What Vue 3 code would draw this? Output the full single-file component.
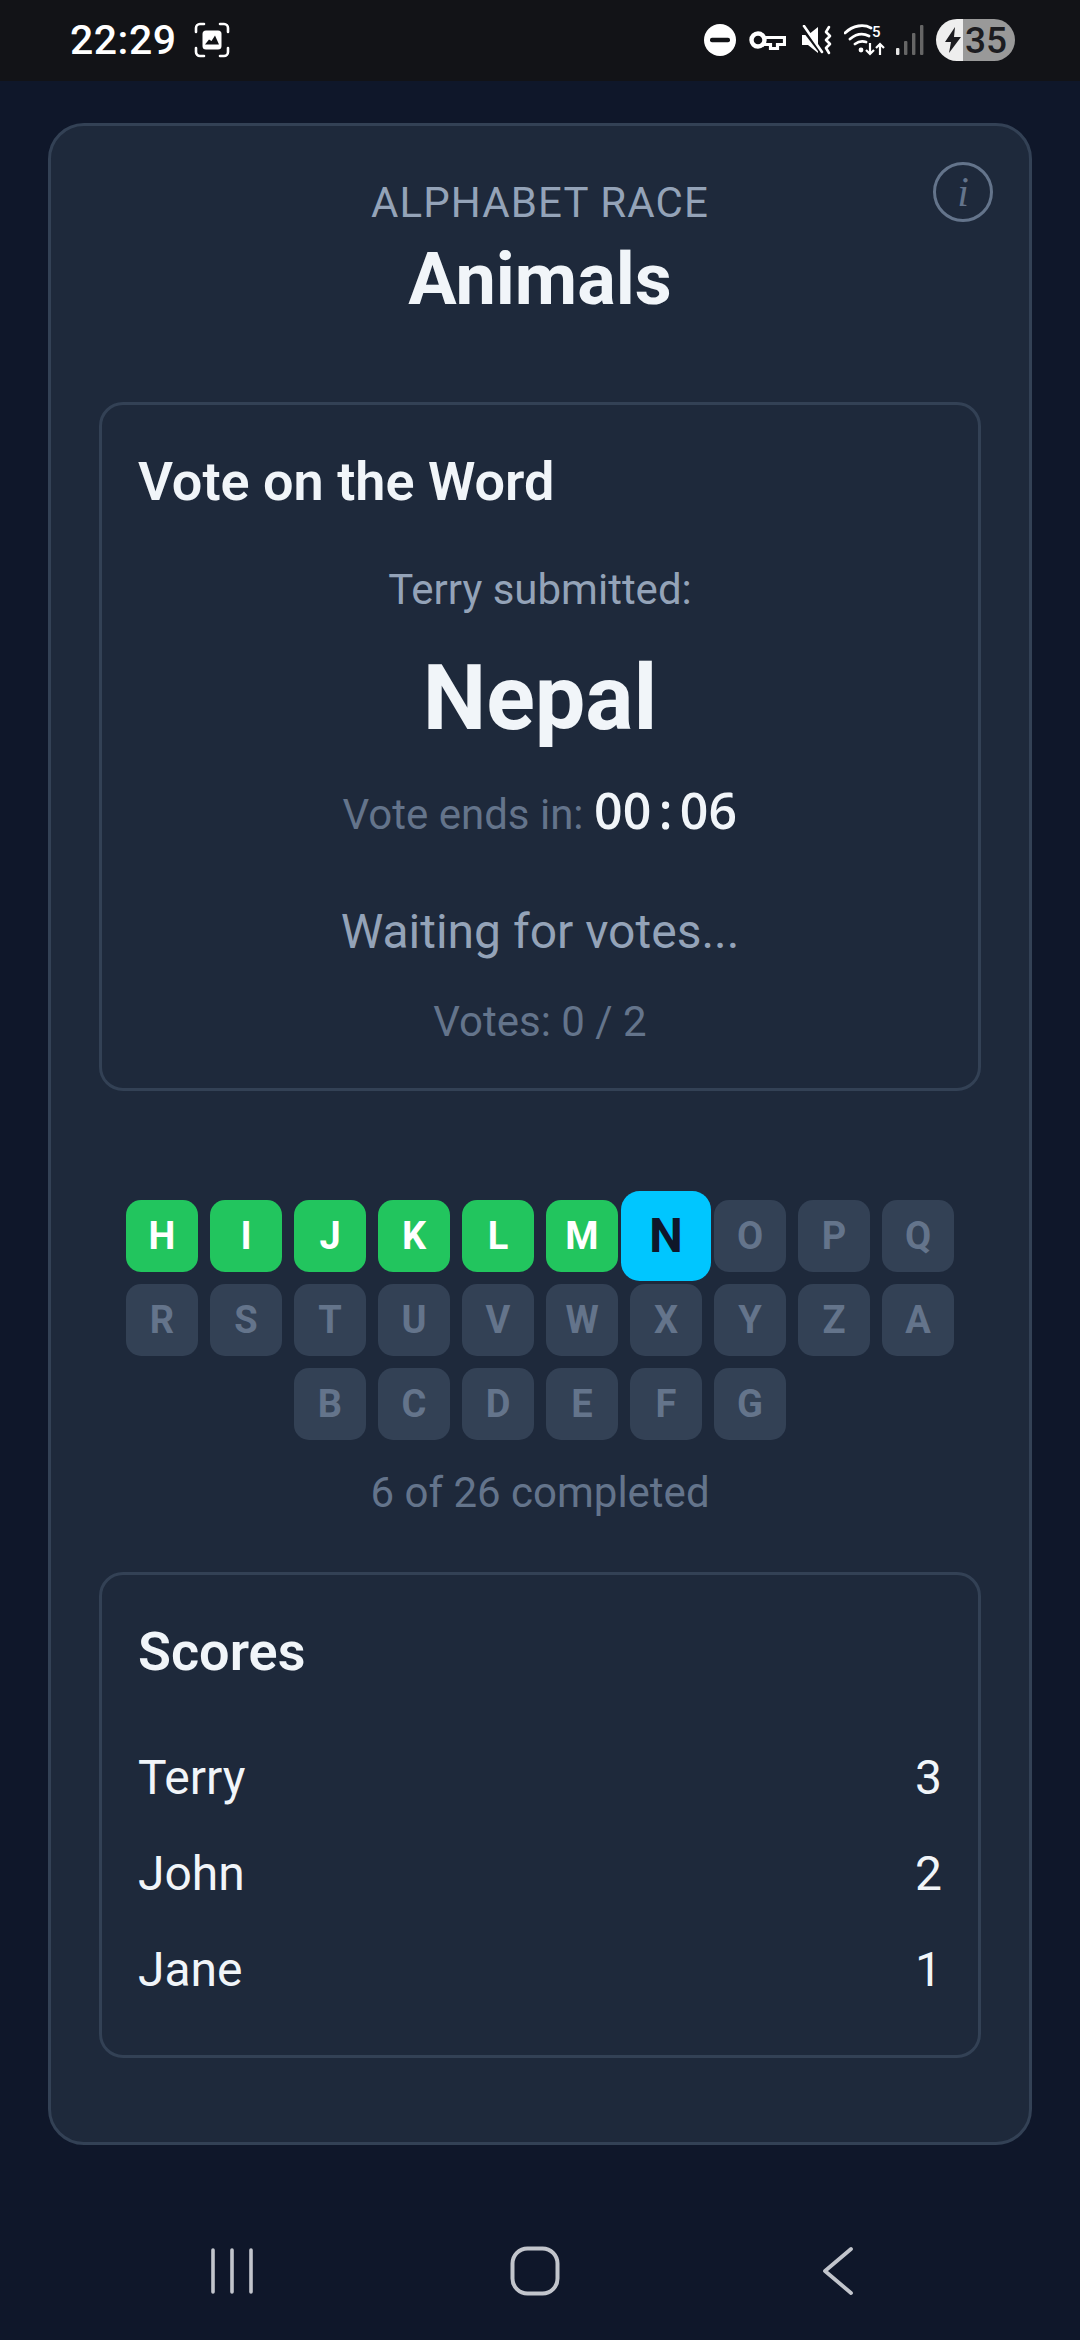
<script setup>
const doneLetters = ["H", "I", "J", "K", "L", "M"];
const current = "N";
const letters = "HIJKLMNOPQRSTUVWXYZABCDEFG".split("");
const scores = [
  { name: "Terry", points: 3 },
  { name: "John", points: 2 },
  { name: "Jane", points: 1 },
];

function tileClass(l) {
  if (l === current) return "tile current";
  if (doneLetters.includes(l)) return "tile done";
  return "tile";
}
</script>

<template>
  <div class="phone">
    <div class="statusbar">
      <div class="status-left">
        <span class="clock">22:29</span>
        <svg class="shot" width="36" height="36" viewBox="0 0 36 36" fill="none">
          <path d="M2 10V6a4 4 0 0 1 4-4h4M26 2h4a4 4 0 0 1 4 4v4M34 26v4a4 4 0 0 1-4 4h-4M10 34H6a4 4 0 0 1-4-4v-4" stroke="#fff" stroke-width="2.6" stroke-linecap="round" />
          <rect x="8.5" y="8.5" width="19" height="19" rx="3.5" fill="#fff" />
          <path d="M11 22.5l4-5 2.5 1.5 3.5-5.5 4 9z" fill="#121317" />
        </svg>
      </div>
      <div class="status-right">
        <svg width="34" height="34" viewBox="0 0 34 34">
          <circle cx="17" cy="17" r="16" fill="#fff" />
          <rect x="7" y="14.8" width="20" height="4.4" rx="2" fill="#121317" />
        </svg>
        <svg class="key" width="37" height="20" viewBox="0 0 37 20" fill="none">
          <circle cx="9" cy="10" r="6.5" stroke="#fff" stroke-width="4.4" />
          <path d="M15 7.5h20.5v7h-7v4h-7v-4H15" stroke="#fff" stroke-width="3.2" />
        </svg>
        <svg width="31" height="30" viewBox="0 0 31 30" fill="none">
          <path d="M1 10h6l10-8v26L7 20H1z" fill="#fff" />
          <path d="M1 3l20 26" stroke="#121317" stroke-width="3" />
          <path d="M3 1l18 26" stroke="#fff" stroke-width="2.6" stroke-linecap="round" />
          <path d="M28 2l-3 5 4 4-4 4 4 4-4 4 3 5" stroke="#fff" stroke-width="2.6" stroke-linejoin="round" stroke-linecap="round" />
        </svg>
        <svg class="wifi" width="42" height="32" viewBox="0 0 42 32" fill="none">
          <path d="M1 9C9 1 20 0 27 4M6 15c6-5 13-6 19-3M11 20c4-3 8-3 11-2" stroke="#fff" stroke-width="2.8" stroke-linecap="round" />
          <circle cx="17" cy="26" r="2.4" fill="#fff" />
          <text x="28" y="13" class="wifi-five">5</text>
          <path d="M26 19v11M22 26l4 4 4-4M36 31V20M32 24l4-4 4 4" stroke="#fff" stroke-width="2.2" />
        </svg>
        <svg width="28" height="30" viewBox="0 0 28 30">
          <rect x="0" y="23" width="3.4" height="7" rx="1" fill="#e5e5e5" />
          <rect x="8" y="16" width="3.4" height="14" rx="1" fill="#666" />
          <rect x="16" y="8" width="3.4" height="22" rx="1" fill="#666" />
          <rect x="24" y="0" width="3.4" height="30" rx="1" fill="#666" />
        </svg>
        <div class="battery">
          <svg class="bolt" width="16" height="26" viewBox="0 0 16 26">
            <path d="M10 0L0 15h6l-2 11L16 10H9z" fill="#1c1c20" />
          </svg>
          <span class="pct">35</span>
        </div>
      </div>
    </div>

    <main class="page">
      <section class="card">
        <button class="info">i</button>
        <header class="head">
          <p class="game">ALPHABET RACE</p>
          <h1 class="topic">Animals</h1>
        </header>

        <div class="panel vote">
          <h2>Vote on the Word</h2>
          <div class="vote-body">
            <p class="submitted">Terry submitted:</p>
            <p class="word">Nepal</p>
            <p class="ends">Vote ends in: <span class="timer">00<span class="colon">:</span>06</span></p>
            <p class="waiting">Waiting for votes...</p>
            <p class="count">Votes: 0 / 2</p>
          </div>
        </div>

        <div class="tiles">
          <div v-for="l in letters" :key="l" :class="tileClass(l)">{{ l }}</div>
        </div>
        <p class="progress">6 of 26 completed</p>

        <div class="panel scores">
          <h2>Scores</h2>
          <ul>
            <li v-for="s in scores" :key="s.name">
              <span>{{ s.name }}</span>
              <span>{{ s.points }}</span>
            </li>
          </ul>
        </div>
      </section>
    </main>

    <nav class="navbar">
      <svg width="46" height="48" viewBox="0 0 46 48" fill="none">
        <path d="M3 3v42M22 3v42M41 3v42" stroke="#c2c5cc" stroke-width="3.6" stroke-linecap="round" />
      </svg>
      <svg class="home" width="50" height="50" viewBox="0 0 50 50" fill="none">
        <rect x="2.5" y="2.5" width="45" height="45" rx="15" stroke="#c2c5cc" stroke-width="4" />
      </svg>
      <svg width="34" height="50" viewBox="0 0 34 50" fill="none">
        <path d="M30 3L4 25l26 22" stroke="#c2c5cc" stroke-width="3.8" stroke-linecap="round" stroke-linejoin="round" />
      </svg>
    </nav>
  </div>
</template>

<style>
body {
  margin: 0;
  background: #0f172a;
}
</style>

<style scoped>
.phone {
  width: 1080px;
  height: 2340px;
  display: flex;
  flex-direction: column;
  background: #0f172a;
  font-family: Roboto, "Noto Sans", sans-serif;
  overflow: hidden;
}

p, h1, h2, ul {
  margin: 0;
  padding: 0;
}

.statusbar {
  height: 81px;
  flex: none;
  background: #121317;
  display: flex;
  justify-content: space-between;
  align-items: center;
  padding: 0 65px 1px 70px;
  box-sizing: border-box;
}
.status-left {
  display: flex;
  align-items: center;
  gap: 17px;
}
.clock {
  color: #fff;
  font-size: 41px;
  font-weight: 500;
  letter-spacing: 0.5px;
}
.status-right {
  display: flex;
  align-items: center;
  gap: 12px;
}
.key {
  margin-right: 3px;
}
.wifi {
  margin-right: -2px;
}
.wifi-five {
  font: 500 15px Roboto, sans-serif;
  fill: #fff;
}
.battery {
  width: 79px;
  height: 42px;
  border-radius: 21px;
  background: linear-gradient(90deg, #eeeeee 0 27px, #999999 27px);
  display: flex;
  align-items: center;
  color: #1c1c20;
  padding-left: 9px;
  box-sizing: border-box;
}
.bolt {
  flex: none;
}
.pct {
  margin-left: 4px;
  font-size: 37px;
  font-weight: 500;
}

.page {
  flex: 1;
  padding: 42px 48px 0;
}
.card {
  position: relative;
  box-sizing: border-box;
  height: 2022px;
  background: #1e293b;
  border: 3px solid #334155;
  border-radius: 36px;
  padding: 36px 48px;
}
.info {
  position: absolute;
  top: 36px;
  right: 36px;
  width: 60px;
  height: 60px;
  padding: 0;
  border: 3px solid #64748b;
  border-radius: 50%;
  background: none;
  color: #64748b;
  font: italic 42px "Liberation Serif", serif;
}
.head {
  text-align: center;
  height: 240px;
}
.game {
  font-size: 42px;
  color: #94a3b8;
  line-height: 46px;
  padding-top: 18px;
  letter-spacing: 1.1px;
}
.topic {
  font-size: 72px;
  line-height: 84px;
  font-weight: 700;
  color: #f1f5f9;
  margin-top: 12px;
}

.panel {
  border: 3px solid #334155;
  border-radius: 24px;
  padding: 45px 36px;
}
.panel h2 {
  font-size: 54px;
  line-height: 60px;
  font-weight: 600;
  color: #f1f5f9;
}

.vote {
  height: 689px;
  box-sizing: border-box;
  padding-top: 47px;
}
.vote-body {
  text-align: center;
  padding-top: 53px;
}
.submitted {
  font-size: 42px;
  line-height: 50px;
  color: #94a3b8;
}
.word {
  font-size: 90px;
  line-height: 106px;
  font-weight: 700;
  color: #f1f5f9;
  margin-top: 31px;
}
.ends {
  font-size: 42px;
  line-height: 58px;
  color: #64748b;
  margin-top: 29px;
}
.timer {
  font-family: "Open Sans", sans-serif;
  font-size: 50px;
  font-weight: 600;
  letter-spacing: 0.3px;
  color: #f1f5f9;
}
.colon {
  display: inline-block;
  width: 28px;
  text-align: center;
}
.waiting {
  font-size: 48px;
  line-height: 56px;
  color: #94a3b8;
  margin-top: 60px;
}
.count {
  font-size: 42px;
  line-height: 50px;
  color: #64748b;
  margin-top: 37px;
}

.tiles {
  display: flex;
  flex-wrap: wrap;
  justify-content: center;
  gap: 12px;
  margin-top: 109px;
}
.tile {
  width: 72px;
  height: 72px;
  border-radius: 15px;
  background: #334155;
  color: #64748b;
  font-size: 38px;
  font-weight: 700;
  display: flex;
  align-items: center;
  justify-content: center;
}
.tile.done {
  background: #22c55e;
  color: #fff;
}
.tile.current {
  background: #00c6ff;
  color: #0f172a;
  transform: scale(1.25);
}
.progress {
  text-align: center;
  font-size: 42px;
  line-height: 50px;
  color: #64748b;
  margin-top: 28px;
}

.scores {
  margin-top: 54px;
  height: 486px;
  box-sizing: border-box;
  padding-top: 47px;
}
.scores ul {
  list-style: none;
  margin-top: 47px;
}
.scores li {
  display: flex;
  justify-content: space-between;
  height: 96px;
  align-items: center;
  font-size: 48px;
  color: #f1f5f9;
}

.navbar {
  height: 48px;
  flex: none;
  margin-bottom: 46px;
  position: relative;
  display: grid;
  grid-template-columns: repeat(3, auto);
  justify-content: space-between;
  align-items: center;
  padding: 0 225px 0 210px;
}
.home {
  margin-right: 8px;
}
</style>
